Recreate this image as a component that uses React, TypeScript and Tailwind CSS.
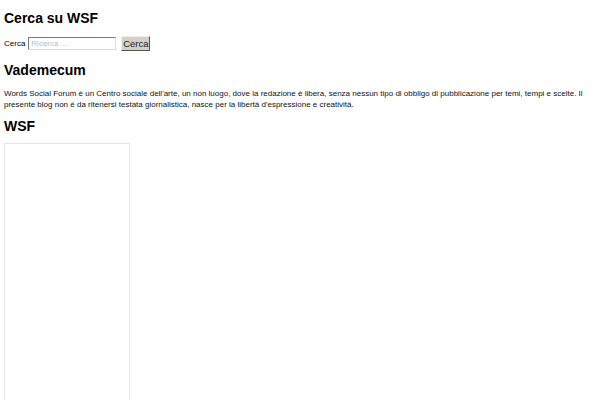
export default function App() {
  return (
    <div className="h-[400px] overflow-hidden bg-white px-[4px] pt-[10px] text-black" style={{ fontFamily: '"Liberation Sans", Arial, sans-serif' }}>
      <h2 className="text-[14px] font-bold leading-[16px]">Cerca su WSF</h2>
      <form className="mt-[10px] flex items-center gap-[3px]" onSubmit={(e) => e.preventDefault()}>
        <label className="text-[8px] leading-[10px]">Cerca</label>
        <input
          type="search"
          placeholder="Ricerca …"
          className="h-[13px] w-[88px] border border-t-[#777] border-l-[#777] border-b-[#ddd] border-r-[#ddd] bg-white px-[2px] text-[8px] outline-none placeholder:text-[#bbb]"
        />
        <button
          type="submit"
          className="ml-[2px] h-[15px] w-[29px] border border-t-[#eee] border-l-[#eee] border-b-[#555] border-r-[#555] bg-[#d4d0c8] px-0 text-[9.5px] leading-none text-[#222]"
        >
          Cerca
        </button>
      </form>
      <h2 className="mt-[11px] text-[14px] font-bold leading-[16px]">Vademecum</h2>
      <p className="mt-[10px] text-[8px] leading-[11px] text-[#111]">
        Words Social Forum è un Centro sociale dell'arte, un non luogo, dove la redazione è libera, senza nessun tipo di obbligo di pubblicazione per temi, tempi e scelte. Il presente blog non è da ritenersi testata giornalistica, nasce per la libertà d'espressione e creatività.
      </p>
      <h2 className="mt-[8px] text-[14px] font-bold leading-[16px]">WSF</h2>
      <div className="mt-[9px] h-[300px] w-[126px] border border-[#e6e6e6]" />
    </div>
  );
}
